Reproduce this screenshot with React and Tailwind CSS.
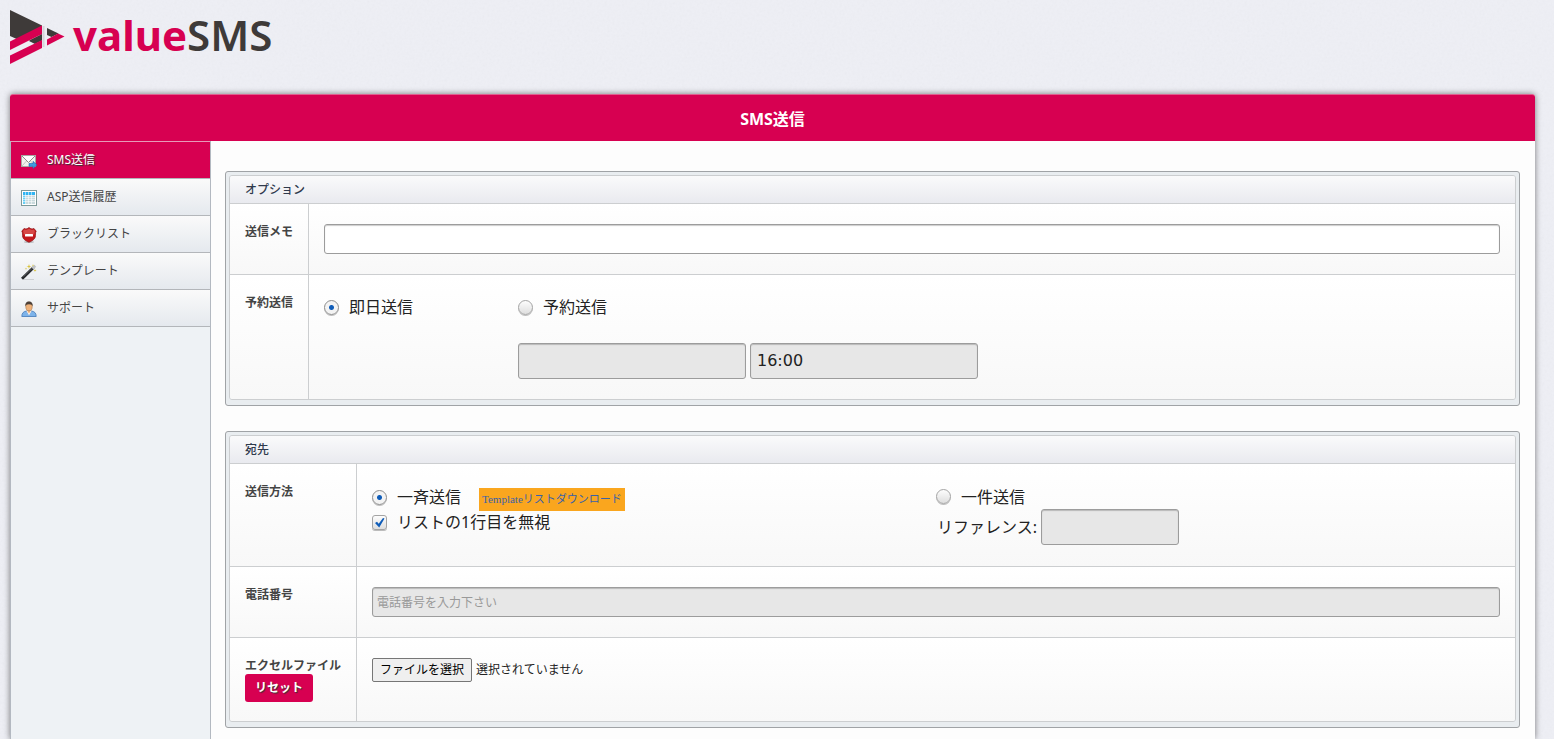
import React, { useRef, useState } from 'react';

const MailIcon = () => (
  <svg className="w-4 h-4 shrink-0" viewBox="0 0 16 16" fill="none">
    <rect x="0.5" y="2.5" width="14" height="11" fill="#f3f3ee" stroke="#a9a9a2" />
    <path d="M1 3l6.5 6.500L14 3" stroke="#8d8d86" fill="#fff" />
    <path d="M1 13l4.500-5M14 13l-4.500-5" stroke="#c6c6bf" />
    <path d="M8 10.500h4V8.300l4 3.600-4 3.600v-2.200H8z" fill="#3f9be0" stroke="#1f64ad" strokeWidth="0.6" />
  </svg>
);

const TableIcon = () => (
  <svg className="w-4 h-4 shrink-0" viewBox="0 0 16 16" fill="none">
    <rect x="0.5" y="0.5" width="15" height="15" fill="#fff" stroke="#7d9999" />
    <rect x="2" y="2" width="12" height="12" fill="#c9dadd" />
    <path d="M2 2h12v3H2z" fill="#2fb4f2" />
    <path d="M2 5h2.500v9H2z" fill="#67d0f7" />
    <path d="M4.500 2v12M7.500 2v12M10.500 2v12M2 5.500h12M2 7.500h12M2 9.500h12M2 11.500h12" stroke="#fff" strokeOpacity="0.75" strokeWidth="0.7" />
  </svg>
);

const ShieldIcon = () => (
  <svg className="w-4 h-4 shrink-0" viewBox="0 0 16 16" fill="none">
    <ellipse cx="8" cy="15" rx="5" ry="1" fill="#000" fillOpacity="0.2" />
    <path d="M8 0.500C6.500 2 4.500 2.200 3 1.500L0.800 4.200C2 6 1.200 8 1.700 10c.6 2.500 3.300 4 6.300 5.300 3-1.300 5.700-2.800 6.300-5.300.5-2-.3-4 .9-5.800L13 1.500C11.500 2.200 9.500 2 8 .5z" fill="#c3171b" stroke="#8f1114" strokeWidth="0.7" />
    <path d="M8 1.500C6.500 3 4.500 3 3.200 2.600L2 4.300C2.800 5.500 2.600 6.500 2.500 7.500h11c-.1-1-.3-2 .5-3.200l-1.200-1.700C11.500 3 9.500 3 8 1.500z" fill="#e46a66" fillOpacity="0.6" />
    <rect x="4" y="7" width="8" height="2.500" rx="0.500" fill="#fff" />
  </svg>
);

const WandIcon = () => (
  <svg className="w-4 h-4 shrink-0" viewBox="0 0 16 16" fill="none">
    <path d="M3 15.500h10" stroke="#000" strokeOpacity="0.12" />
    <path d="M1 14.800L12.500 3.500" stroke="#26282b" strokeWidth="2.800" />
    <path d="M2.500 12.500L11 4.500" stroke="#77797c" strokeWidth="0.600" />
    <path d="M11.500 4.500l2.800-2.700" stroke="#bfc1c4" strokeWidth="2.600" />
    <path d="M8 0l.6 1.900 1.900.6-1.900.6L8 5l-.6-1.900-1.900-.6 1.900-.6zM14 5l.4 1.100 1.100.4-1.100.4L14 8l-.4-1.100-1.100-.4 1.100-.4zM5 3.500l.3 1 1 .3-1 .3-.3 1-.3-1-1-.3 1-.3zM12 0l.3.900.9.300-.9.300-.3.900-.3-.9-.9-.3.9-.3z" fill="#d8c23c" />
  </svg>
);

const UserIcon = () => (
  <svg className="w-4 h-4 shrink-0" viewBox="0 0 16 16" fill="none">
    <path d="M0.800 15.500c0-3.500 1.700-5 4.700-5.500h5c3 .5 4.700 2 4.700 5.500z" fill="#7db3ea" stroke="#4379b8" strokeWidth="0.800" />
    <path d="M5.500 9.500L8 14l2.500-4.500z" fill="#f0b077" />
    <path d="M6 10l2 3.500L10 10" stroke="#fff" strokeWidth="0.800" />
    <ellipse cx="8" cy="5.500" rx="3.200" ry="4.300" fill="#eeb27b" stroke="#a97748" strokeWidth="0.600" />
    <path d="M4.400 5.500C4 2 5.500.5 8 .5s4 1.500 3.600 5C11 4 10.500 3.300 8 3.300S5 4 4.400 5.500z" fill="#4c4038" />
  </svg>
);

const MENU = [
  { label: 'SMS送信', icon: MailIcon, active: true },
  { label: 'ASP送信履歴', icon: TableIcon },
  { label: 'ブラックリスト', icon: ShieldIcon },
  { label: 'テンプレート', icon: WandIcon },
  { label: 'サポート', icon: UserIcon },
];

const inputBase =
  'border border-[#9c9c9c] rounded-[3px] shadow-[inset_0_1px_1px_rgba(0,0,0,0.2)] outline-none text-[#222]';
const boxBase =
  'appearance-none w-[15px] h-[15px] shrink-0 border border-[#a4a4a4] bg-linear-to-b from-[#fdfdfd] to-[#dedede] shadow-[0_1px_0_rgba(0,0,0,0.25)]';

function Logo() {
  return (
    <a href="#top" className="flex items-start gap-2 w-max" aria-label="valueSMS">
      <svg className="w-[55px] h-[54px]" viewBox="0 0 55 54">
        <path d="M0 0L32 15.500V24L10 30.500L0 26z" fill="#3e3a39" />
        <path d="M20 30L32 24V30.500L25 34L19 31z" fill="#3e3a39" />
        <path d="M0 31.500L32 15.500V24L0 40z" fill="#d70051" />
        <path d="M0 45.500L32 30V38L0 54z" fill="#d70051" />
        <path d="M33.500 16v21" stroke="#d4d5da" strokeWidth="2" />
        <path d="M37 18L48.500 23.500L41.500 27L37 25z" fill="#3e3a39" />
        <path d="M37 29.500L48 23.500L54.500 26.500L37 35.500z" fill="#d70051" />
      </svg>
      <span className="font-['Noto_Sans'] text-[42px] leading-[50px] font-bold text-[#d70051]">
        value<span className="text-[#3e3a39] font-semibold">SMS</span>
      </span>
    </a>
  );
}

function Panel({ title, children }) {
  return (
    <section className="border border-[#a0a3a6] rounded-[3px] bg-[#e9edf0] px-[3px] pt-[3px] pb-[5px]">
      <div className="border border-[#ccced0] rounded-[3px] overflow-hidden">
        <h2 className="h-7 flex items-center px-[15px] text-xs text-[#2f3a4c] font-medium bg-linear-to-b from-[#fafafb] to-[#e9eaef] border-b border-[#ccced0]">
          {title}
        </h2>
        <div className="divide-y divide-[#ccced0]">{children}</div>
      </div>
    </section>
  );
}

function Row({ label, labelWidth, children }) {
  return (
    <div className="flex bg-linear-to-b from-white to-[#f8f8f8]">
      <div className={`${labelWidth} shrink-0 border-r border-[#ccced0] pl-[15px] pt-5 text-xs leading-4 font-bold text-[#444]`}>
        {label}
      </div>
      <div className="flex-1 px-[15px] py-5">{children}</div>
    </div>
  );
}

function Radio({ name, value, current, onChange, children }) {
  return (
    <label className="flex items-center gap-[10px]">
      <input
        type="radio"
        name={name}
        checked={current === value}
        onChange={() => onChange(value)}
        className={`${boxBase} rounded-full checked:bg-[radial-gradient(circle,#0f5cb8_0_2px,#f3f3f3_3px)] checked:border-[#8d8d8d]`}
      />
      {children}
    </label>
  );
}

export default function App() {
  const [timing, setTiming] = useState('now');
  const [method, setMethod] = useState('bulk');
  const [skipFirst, setSkipFirst] = useState(true);
  const [fileName, setFileName] = useState('');
  const fileRef = useRef(null);

  const resetFile = () => {
    fileRef.current.value = '';
    setFileName('');
  };

  return (
    <div
      id="top"
      className="relative isolate min-h-screen flex flex-col bg-[#eeeff5] pl-[10px] pr-[19px] font-['Noto_Sans','Noto_Sans_CJK_JP',sans-serif] text-[#222]"
    >
      {/* Paper grain */}
      <svg className="absolute inset-0 -z-10 w-full h-full opacity-5" aria-hidden="true">
        <filter id="grain">
          <feTurbulence type="fractalNoise" baseFrequency="0.4" numOctaves="2" />
          <feColorMatrix type="saturate" values="0" />
        </filter>
        <rect width="100%" height="100%" filter="url(#grain)" />
      </svg>

      <header className="h-[94px] pt-[10px]">
        <Logo />
      </header>

      <div className="flex-1 flex flex-col bg-[#fdfdfd] rounded-t-[3px] shadow-[0_0_6px_rgba(0,0,0,0.5)]">
        <h1 className="h-[47px] pt-[2px] flex items-center justify-center rounded-t-[3px] border-t border-[#e0608f] bg-[#d70051] text-base font-bold text-white">
          SMS送信
        </h1>

        <div className="flex-1 flex">
          {/* Side menu */}
          <nav className="w-[201px] shrink-0 border-x border-[#b3b9c1] bg-[#eef2f5]">
            <ul>
              {MENU.map(({ label, icon: Icon, active }) => (
                <li key={label}>
                  <a
                    href="#top"
                    className={
                      active
                        ? 'h-[38px] flex items-center gap-[10px] px-[10px] text-xs border-t border-b border-t-[#e79ab8] border-b-[#b3b6ba] bg-[#d70051] text-white [text-shadow:1px_1px_1px_#333]'
                        : 'h-[37px] flex items-center gap-[10px] px-[10px] text-xs border-b border-[#b3b6ba] bg-linear-to-b from-[#fafafa] to-[#e5e9ee] text-[#444]'
                    }
                  >
                    <span className="pt-[2px]">
                      <Icon />
                    </span>
                    {label}
                  </a>
                </li>
              ))}
            </ul>
          </nav>

          <main className="flex-1 min-w-0 pl-[14px] pr-[15px] pt-[30px] pb-[11px] flex flex-col gap-[25px]">
            <Panel title="オプション">
              <Row labelWidth="w-[79px]" label={<label htmlFor="memo">送信メモ</label>}>
                <input id="memo" type="text" className={`${inputBase} block w-full h-[30px] px-1 text-xs bg-white`} />
              </Row>
              <Row labelWidth="w-[79px]" label="予約送信">
                <div className="grid grid-cols-[194px_1fr] gap-y-[23px] h-[84px] leading-6">
                  <Radio name="timing" value="now" current={timing} onChange={setTiming}>即日送信</Radio>
                  <Radio name="timing" value="later" current={timing} onChange={setTiming}>予約送信</Radio>
                  <div className="col-start-2 flex gap-1">
                    <input
                      type="text"
                      aria-label="予約日"
                      disabled={timing === 'now'}
                      className={`${inputBase} w-[228px] h-9 px-[6px] bg-[#e7e7e7]`}
                    />
                    <input
                      type="text"
                      aria-label="予約時刻"
                      defaultValue="16:00"
                      disabled={timing === 'now'}
                      className={`${inputBase} w-[228px] h-9 px-[6px] bg-[#e7e7e7] font-['DejaVu_Sans']`}
                    />
                  </div>
                </div>
              </Row>
            </Panel>

            <Panel title="宛先">
              <Row labelWidth="w-[127px]" label="送信方法">
                <div className="grid grid-cols-2 h-[62px]">
                  <div>
                    <div className="flex items-center gap-[18px] h-[26px]">
                      <Radio name="method" value="bulk" current={method} onChange={setMethod}>一斉送信</Radio>
                      <a
                        href="#template"
                        className="mt-1 bg-[#faa61e] px-[3px] text-[11px] leading-[23px] text-[#3a62a8] font-['Liberation_Serif','Noto_Sans_CJK_JP',serif]"
                      >
                        Templateリストダウンロード
                      </a>
                    </div>
                    <label className="flex items-center gap-[10px] h-6">
                      <span className="relative flex">
                        <input
                          type="checkbox"
                          checked={skipFirst}
                          onChange={(e) => setSkipFirst(e.target.checked)}
                          className={`${boxBase} rounded-[3px]`}
                        />
                        {skipFirst && (
                          <svg className="absolute inset-0 w-[15px] h-[15px] pointer-events-none" viewBox="0 0 15 15">
                            <path d="M3 8l2-1.300 1.700 2L11 3l1.500.6-5.300 9z" fill="#0f5cb8" />
                          </svg>
                        )}
                      </span>
                      リストの1行目を無視
                    </label>
                  </div>
                  <div>
                    <div className="h-[25px] flex items-center">
                      <Radio name="method" value="single" current={method} onChange={setMethod}>一件送信</Radio>
                    </div>
                    <label className="flex items-center gap-1 pl-px">
                      リファレンス:
                      <input
                        type="text"
                        disabled={method === 'bulk'}
                        className={`${inputBase} w-[138px] h-9 px-[6px] bg-[#e7e7e7]`}
                      />
                    </label>
                  </div>
                </div>
              </Row>
              <Row labelWidth="w-[127px]" label={<label htmlFor="phone">電話番号</label>}>
                <input
                  id="phone"
                  type="tel"
                  placeholder="電話番号を入力下さい"
                  disabled={method === 'bulk'}
                  className={`${inputBase} block w-full h-[30px] px-1 text-xs bg-[#e7e7e7] placeholder:text-[#999]`}
                />
              </Row>
              <Row
                labelWidth="w-[127px]"
                label={
                  <>
                    <label htmlFor="excel" className="block">エクセルファイル</label>
                    <button
                      type="button"
                      onClick={resetFile}
                      className="block h-7 px-[10px] rounded-[3px] bg-[#d70051] text-white [text-shadow:1px_1px_1px_#333]"
                    >
                      リセット
                    </button>
                  </>
                }
              >
                <div className="h-[43px] flex items-start gap-1 text-xs leading-6">
                  <button
                    type="button"
                    onClick={() => fileRef.current.click()}
                    className="h-6 px-[7px] border border-[#767676] rounded-[2px] bg-[#efefef] leading-[22px] text-black"
                  >
                    ファイルを選択
                  </button>
                  <input
                    id="excel"
                    ref={fileRef}
                    type="file"
                    className="hidden"
                    onChange={(e) => setFileName(e.target.files[0]?.name ?? '')}
                  />
                  <span>{fileName || '選択されていません'}</span>
                </div>
              </Row>
            </Panel>
          </main>
        </div>
      </div>
    </div>
  );
}
